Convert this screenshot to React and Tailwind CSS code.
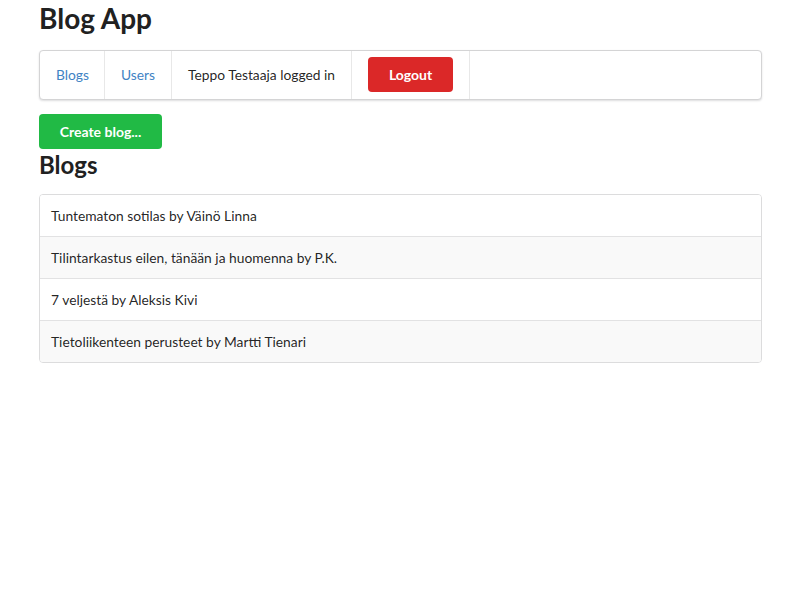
const blogs = [
  "Tuntematon sotilas by Väinö Linna",
  "Tilintarkastus eilen, tänään ja huomenna by P.K.",
  "7 veljestä by Aleksis Kivi",
  "Tietoliikenteen perusteet by Martti Tienari",
];

export default function App() {
  return (
    <div className="min-h-[600px] bg-white font-['Lato','Liberation_Sans',sans-serif] text-[13.8px] text-[rgba(0,0,0,0.87)]">
      <div className="ml-[39px] mr-[38px]">
        <h1 className="m-0 text-[28px] font-bold leading-[36px] text-[#212121]">Blog App</h1>

        {/* top menu */}
        <div className="mt-[14px] flex h-[50px] rounded-[4px] border border-[#d4d4d5] bg-white shadow-[0_1px_2px_0_rgba(34,36,38,0.15)]">
          <a className="flex items-center border-r border-[#e8e8e8] pl-4 pr-[15px] text-[#4183c4]">Blogs</a>
          <a className="flex items-center border-r border-[#e8e8e8] px-4 text-[#4183c4]">Users</a>
          <div className="flex items-center border-r border-[#e8e8e8] px-4">Teppo Testaaja logged in</div>
          <div className="flex items-start border-r border-[#e8e8e8] pl-[16px] pr-[16px] pt-[6px]">
            <button className="h-[35px] w-[85px] rounded-[4px] bg-[#db2828] text-[14px] font-bold text-white">
              Logout
            </button>
          </div>
        </div>

        <button className="mt-[14px] h-[35px] w-[123px] rounded-[4px] bg-[#21ba45] text-[14px] font-bold text-white">
          Create blog...
        </button>

        <h2 className="m-0 text-[24px] font-bold leading-[31px] text-[#212121]">Blogs</h2>

        <div className="mt-[14px] overflow-hidden rounded-[4px] border border-[#dcdcdd]">
          {blogs.map((b, i) => (
            <div
              key={b}
              className={`box-content flex h-[39px] items-center px-[11px] pt-[2px] ${i > 0 ? "border-t border-[#e2e2e3]" : ""} ${i % 2 === 1 ? "bg-[#f9f9f9]" : "bg-white"}`}
            >
              {b}
            </div>
          ))}
        </div>
      </div>
    </div>
  );
}
